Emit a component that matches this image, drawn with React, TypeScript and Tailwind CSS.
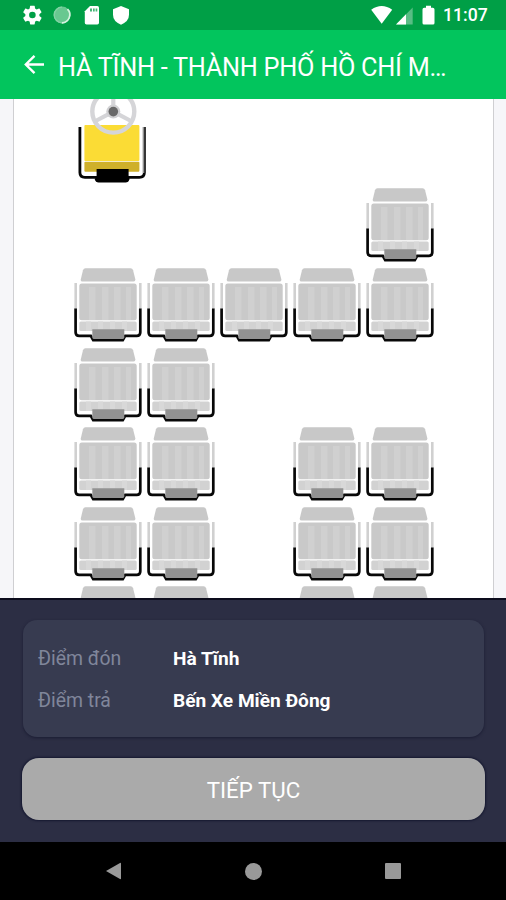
import React from "react";

const seatRows: boolean[][] = [
  [false, false, false, false, true],
  [true, true, true, true, true],
  [true, true, false, false, false],
  [true, true, false, true, true],
  [true, true, false, true, true],
  [true, true, false, true, true],
];

function Seat() {
  return (
    <svg className="block h-[79.6px] w-[73px]" viewBox="0 0 73 79.6">
      <path d="M11.5.3h45q2 0 2.6 2l2.2 9q.4 2.3-1.8 2.3H8.6q-2.2 0-1.8-2.3L9 2.2Q9.6.3 11.5.3Z" fill="#c8c8c8" />
      <rect x="5.3" y="15.5" width="57.4" height="36.7" rx="2.5" fill="#c9c9c9" />
      <path d="M15 19h6.5v33H15zM28 19h6.5v33H28zM40 19h6.5v33H40zM52 19h5v33h-5z" fill="#d0d0d0" />
      <rect x="5.3" y="53.5" width="57.4" height="9.6" rx="1.5" fill="#d2d2d2" />
      <path d="M12 53.5h5v9.6h-5zM24 53.5h5v9.6h-5zM36 53.5h5v9.6h-5zM48 53.5h5v9.6h-5z" fill="#d8d8d8" />
      <path d="M1.7 14.9v26M66.3 14.9v26" stroke="#d0d0d0" strokeWidth="2.6" />
      <path d="M1.6 40.5V64.2q0 3.6 3.6 3.6h11.6l2.4 4.3h29.6l2.4-4.3h11.6q3.5 0 3.5-3.6V40.5" fill="none" stroke="#080808" strokeWidth="2.7" />
      <path d="M18.3 61.3h32v8q0 1.7-1.5 1.7h-29q-1.5 0-1.5-1.7Z" fill="#929292" />
    </svg>
  );
}

function DriverSeat() {
  return (
    <svg className="block h-[89.4px] w-[80px]" viewBox="74.4 99 80 89.4">
      <rect x="84.8" y="125" width="55" height="36" rx="1" fill="#fbdc35" />
      <rect x="84.8" y="161.8" width="55" height="10" rx="1" fill="#cfb02a" />
      <path d="M80.3 127v45.5q0 4.8 5 4.8h54.5q5 0 5-4.8V127" fill="none" stroke="#050505" strokeWidth="2.8" />
      <path d="M143.9 127v46" stroke="#929292" strokeWidth="1.7" />
      <path d="M97 169h32v8l1 2q-1 3.5-4 3.5H99q-3 0-4-3.5l2-2Z" fill="#000" />
      <circle cx="113.7" cy="111.6" r="21" fill="none" stroke="#d5d5d8" strokeWidth="4.4" />
      <path d="M113.7 111.6V92M113.7 111.6 96 121M113.7 111.6l17.7 9.4" stroke="#d5d5d8" strokeWidth="4.2" />
      <circle cx="113.7" cy="111.6" r="7" fill="#d0d0d2" />
      <circle cx="113.7" cy="111.6" r="4.8" fill="#686868" />
    </svg>
  );
}

function StatusBar() {
  return (
    <div className="flex h-[30px] shrink-0 items-center bg-[#009f46] text-white">
      <svg className="h-[30px] w-[140px]" viewBox="0 0 140 30">
        <path
          transform="translate(21.1 3.8) scale(.94)"
          fill="#fff"
          d="M19.43 12.98c.04-.32.07-.64.07-.98s-.03-.66-.07-.98l2.11-1.65a.5.5 0 0 0 .12-.64l-2-3.46a.5.5 0 0 0-.61-.22l-2.49 1a7.7 7.7 0 0 0-1.69-.98l-.38-2.65A.49.49 0 0 0 14 2h-4a.49.49 0 0 0-.49.42l-.38 2.65c-.61.25-1.17.59-1.69.98l-2.49-1a.49.49 0 0 0-.61.22l-2 3.46a.5.5 0 0 0 .12.64l2.11 1.65c-.04.32-.07.65-.07.98s.03.66.07.98l-2.11 1.65a.5.5 0 0 0-.12.64l2 3.46c.12.22.39.3.61.22l2.49-1c.52.4 1.08.73 1.69.98l.38 2.65c.03.24.24.42.49.42h4c.25 0 .46-.18.49-.42l.38-2.65a7.7 7.7 0 0 0 1.69-.98l2.49 1c.23.09.49 0 .61-.22l2-3.46a.5.5 0 0 0-.12-.64ZM12 15.5a3.5 3.5 0 1 1 0-7 3.5 3.5 0 0 1 0 7Z"
        />
        <circle cx="62" cy="15" r="8.4" fill="#68c890" />
        <path d="M62 7.2a7.8 7.8 0 1 0 7.8 7.8" fill="none" stroke="#83d2a4" strokeWidth="1.3" />
        <path d="M67.5 9.2a8 8 0 0 1-5.5 13.6" fill="none" stroke="#d6f2df" strokeWidth="1.7" />
        <path d="M90 6h7.3q1.7 0 1.7 1.7v15.1q0 1.7-1.7 1.7H86.5q-1.7 0-1.7-1.7V11.3Z" fill="#fff" />
        <path d="M90 8.5h2v3h-2zM93 8.5h1.7v3H93zM95.6 8.5h1.7v3h-1.7z" fill="#45b777" />
        <path d="m121 6 8 3.2v5.6q0 6.6-8 9.9-8-3.3-8-9.9V9.2Z" fill="#fff" />
      </svg>
      <svg className="ml-auto h-[30px] w-[71px]" viewBox="370 0 71 30">
        <path d="M371.2 9.7q10.5-7.5 21 0L381.7 23.8Z" fill="#fff" />
        <path d="M412.7 7.5v17H396Z" fill="#58bd84" />
        <path d="M406 14.3v10.2h-10Z" fill="#fff" />
        <path d="M426 5.8h5v2h1.8q1.7 0 1.7 1.7v13.6q0 1.5-1.5 1.5h-9q-1.5 0-1.5-1.5V9.5q0-1.7 1.7-1.7h1.8Z" fill="#fff" />
      </svg>
      <span className="mt-[2px] w-[65px] pl-[2px] text-[17.6px] font-medium leading-none">11:07</span>
    </div>
  );
}

function TripLine({ label, value }: { label: string; value: string }) {
  return (
    <div className="flex h-[42px] items-center whitespace-nowrap">
      <span className="w-[135px] text-[19.4px] text-[#80869b]">{label}</span>
      <span className="text-[19.1px] font-bold text-white">{value}</span>
    </div>
  );
}

export default function App() {
  return (
    <div className="flex h-[900px] w-[506px] flex-col overflow-hidden bg-black font-['Roboto','Noto_Sans',sans-serif]">
      <StatusBar />
      <header className="flex h-[69px] shrink-0 items-center bg-[#02c55d] pl-[24px] text-white">
        <svg className="h-[22px] w-[22px] shrink-0" viewBox="0 0 22 22">
          <path d="M20 10.5H2M10.5 1.8 1.8 10.5l8.7 8.7" fill="none" stroke="#fff" strokeWidth="2.4" />
        </svg>
        <h1 className="ml-[12px] mt-[6px] whitespace-nowrap text-[25.3px] leading-none tracking-[-0.27px]">HÀ TĨNH - THÀNH PHỐ HỒ CHÍ M…</h1>
      </header>
      <main className="flex h-[499px] shrink-0 justify-center overflow-hidden bg-[#f6f6f9]">
        <div className="h-[499px] w-[481px] overflow-hidden border-x border-[#cfcfd2] bg-white pl-[60px]">
          <DriverSeat />
          {seatRows.map((row, r) => (
            <div key={r} className="grid w-[365px] grid-cols-5">
              {row.map((seat, c) => (
                <div key={c} className="h-[79.6px]">{seat && <Seat />}</div>
              ))}
            </div>
          ))}
        </div>
      </main>
      <section className="h-[244px] shrink-0 border-t-2 border-[#0c0c1c] bg-[#2c2e44] pl-[22px] pr-[21px] pt-[20px]">
        <div className="mx-px h-[117px] rounded-[14px] bg-[#373b50] px-[15px] pt-[18px] shadow-[0_1px_3px_rgba(15,16,40,0.6)]">
          <TripLine label="Điểm đón" value="Hà Tĩnh" />
          <TripLine label="Điểm trả" value="Bến Xe Miền Đông" />
        </div>
        <button className="mt-[21px] flex h-[62px] w-full items-center justify-center rounded-[17px] bg-[#aaaaaa] pt-[3px] text-[22.3px] text-white shadow-[0_0_2px_1px_rgba(12,14,40,0.7)]">
          TIẾP TỤC
        </button>
      </section>
      <nav className="grid h-[58px] shrink-0 grid-cols-[183px_140px_183px] items-center bg-black">
        <svg className="ml-[105px] h-[18px] w-[17px]" viewBox="0 0 17 18">
          <path d="M1 9 15 1q1-.5 1 .5v15q0 1-1 .5Z" fill="#999" />
        </svg>
        <span className="h-[17px] w-[17px] justify-self-center rounded-full bg-[#999]" />
        <span className="ml-[62px] h-[16px] w-[16px] rounded-[1px] bg-[#999]" />
      </nav>
    </div>
  );
}
